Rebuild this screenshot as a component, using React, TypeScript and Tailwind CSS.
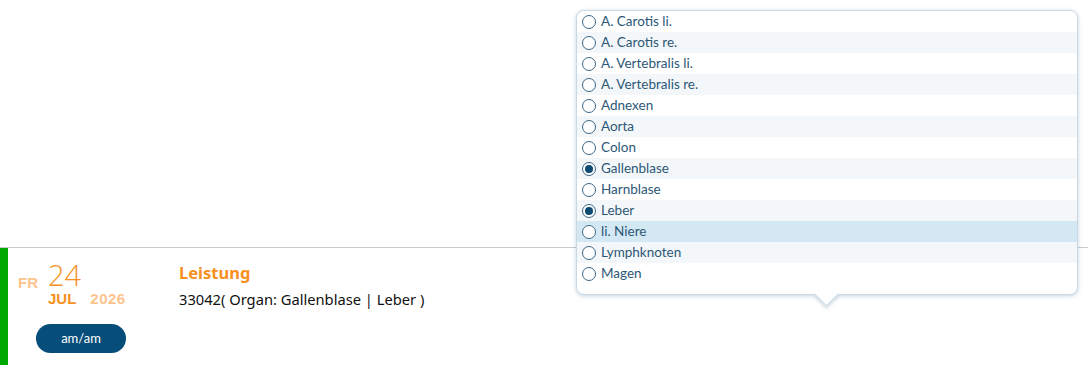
import React from 'react';

const ORGANS = [
  'A. Carotis li.',
  'A. Carotis re.',
  'A. Vertebralis li.',
  'A. Vertebralis re.',
  'Adnexen',
  'Aorta',
  'Colon',
  'Gallenblase',
  'Harnblase',
  'Leber',
  'li. Niere',
  'Lymphknoten',
  'Magen',
];

const SELECTED = ['Gallenblase', 'Leber'];
const HOVERED = 'li. Niere';

function Radio({ checked }: { checked: boolean }) {
  return (
    <span className="flex h-[14px] w-[14px] shrink-0 items-center justify-center rounded-full border-[1.5px] border-[#3b6686] bg-white">
      {checked && <span className="h-[8px] w-[8px] rounded-full bg-[#0b4a73]" />}
    </span>
  );
}

function OrganPopover() {
  return (
    <div className="absolute left-[576px] top-[10px] z-10 w-[502px] rounded-lg border border-[#c9d9e4] bg-white shadow-[0_1px_4px_rgba(90,130,160,0.35)]">
      <ul className="pb-[10px]">
        {ORGANS.map((o, i) => {
          const bg = o === HOVERED ? 'bg-[#d3e8f3]' : i % 2 === 1 ? 'bg-[#f4f7f9]' : 'bg-white';
          return (
            <li
              key={o}
              className={`flex h-[21px] items-center gap-[5px] pl-[5px] text-[13.5px] text-[#2c5777] ${bg} ${i === 0 ? 'rounded-t-lg' : ''}`}
            >
              <Radio checked={SELECTED.includes(o)} />
              <span>{o}</span>
            </li>
          );
        })}
      </ul>
      {/* Tail */}
      <div className="absolute left-[241px] top-full h-[17px] w-[17px] -translate-y-[8px] rotate-45 border-b border-r border-[#c9d9e4] bg-white shadow-[2px_2px_3px_rgba(90,130,160,0.25)]" />
    </div>
  );
}

export default function App() {
  return (
    <div className="relative h-[365px] w-[1088px] overflow-hidden bg-white font-['Lato',sans-serif]">
      <div className="h-[247px]" />
      <OrganPopover />
      <div className="flex h-[118px] border-t border-[#c6cbd0]">
        <div className="w-[8px] bg-[#00a800]" />
        <div className="flex flex-col pl-[10px] font-['Liberation_Sans',sans-serif]">
          <div className="flex items-start pt-[11px]">
            <span className="mt-[16px] w-[30px] text-[15px] leading-[16px] font-bold text-[#fbc48c]">FR</span>
            <div className="flex flex-col">
              <span className="font-['Open_Sans',sans-serif] text-[29px] leading-[32px] font-light text-[#f7901e]">24</span>
              <div className="flex gap-[14px] text-[15px] font-bold leading-[16px]">
                <span className="text-[#f7901e]">JUL</span>
                <span className="tracking-[0.5px] text-[#fbc48c]">2026</span>
              </div>
            </div>
          </div>
          <button className="ml-[18px] mt-[17px] h-[29px] w-[90px] rounded-full bg-[#074d7a] font-['Lato',sans-serif] text-[13px] text-white">
            am/am
          </button>
        </div>
        <div className="ml-[53px] flex flex-col pt-[14px] font-['Noto_Sans',sans-serif]">
          <span className="text-[16.5px] font-bold leading-[22px] text-[#f7901e]">Leistung</span>
          <span className="mt-[4px] text-[14.7px] text-[#111]">33042( Organ: Gallenblase | Leber )</span>
        </div>
      </div>
    </div>
  );
}
